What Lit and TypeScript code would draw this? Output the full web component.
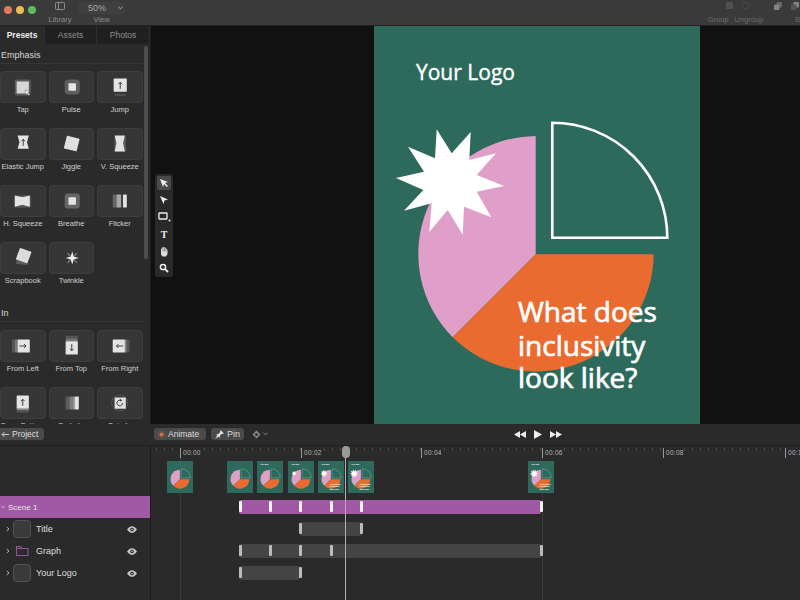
import { LitElement, html, svg, css } from 'lit';
import { customElement } from 'lit/decorators.js';

const STAR =
  '436.7,129.3 451.7,153.3 470.7,132 469.3,160 496,153.3 476.7,175 504,186 476.7,191.7 491.3,217.3 464,206.7 462.7,234.7 447.7,210 429.3,232 431.7,203.3 404,210.7 423.3,190 396,178 424,171.7 408,146.7 435,158.3';

// stage of the poster shown on each timeline thumbnail
interface PosterOpts {
  logo?: boolean;
  star?: number;
  title?: boolean;
}

function poster({ logo = true, star = 1, title = true }: PosterOpts) {
  const s = star;
  return html`<svg class="poster" viewBox="374 26 326 401" preserveAspectRatio="xMidYMin slice">
    <rect x="374" y="26" width="326" height="401" fill="#2d6a5c" />
    <path d="M535.7 136A118 118 0 0 0 452.7 337.3L535.7 254.3Z" fill="#e09fc8" />
    <path d="M452.7 337.3A118 118 0 0 0 653.7 254.3H535.7Z" fill="#ea6b2f" />
    <path d="M552.3 122.8A115 115 0 0 1 667.3 237.8H552.3Z" fill="none" stroke="#fff" stroke-width="2.6" />
    ${s > 0
      ? svg`<polygon points=${STAR} fill="#fff"
          transform="translate(${450 * (1 - s)} ${181 * (1 - s)}) scale(${s})" />`
      : ''}
    ${logo
      ? svg`<text x="416" y="80" class="logo-text">Your Logo</text>`
      : ''}
    ${title
      ? svg`<text class="title-text">
          <tspan x="518" y="322">What does</tspan>
          <tspan x="518" y="356">inclusivity</tspan>
          <tspan x="518" y="388">look like?</tspan>
        </text>`
      : ''}
  </svg>`;
}

// preset thumbnails, drawn on the 45x32 tile
const sq = (x: number, y: number, w: number, h: number, fill = '#e4e4e4', r = 0.5) =>
  svg`<rect x=${x} y=${y} width=${w} height=${h} rx=${r} fill=${fill} />`;
const arrow = (d: string) =>
  svg`<path d=${d} fill="none" stroke="#333" stroke-width="1" />`;

const ICONS: Record<string, unknown> = {
  Tap: svg`${sq(14, 8, 17, 17, '#5c5c5c', 2)}${sq(16, 10, 13, 13, '#d6d6d6')}
    <path d="M25 19l5 2-2 1 2 2-1 1-2-2-1 2z" fill="#eee" stroke="#444" stroke-width=".4" />`,
  Pulse: svg`${sq(15, 8, 16, 16, '#5e5e5e', 4)}${sq(19, 12, 8, 8)}`,
  Jump: svg`${sq(16, 7, 14, 14)}${sq(17, 24, 12, 1, '#666')}${arrow('M23 18v-7M21 13l2-2 2 2')}`,
  'Elastic Jump': svg`<path d="M17 7h12l-2 7 2 7H17l2-7z" fill="#e4e4e4" />${arrow('M23 18v-7M21 13l2-2 2 2')}`,
  Jiggle: svg`${svg`<rect x="15.5" y="8.5" width="14" height="14" rx=".5" fill="#e0e0e0" transform="rotate(14 22.5 15.5)" />`}`,
  'V. Squeeze': svg`${sq(17, 8, 12, 16, '#5c5c5c')}<path d="M17 7h11l-2 8 2 9H17l2-9z" fill="#e2e2e2" />`,
  'H. Squeeze': svg`${sq(14, 10, 17, 13, '#5c5c5c')}<path d="M14 10l8 2 8-2v12l-8-2-8 2z" fill="#e4e4e4" />`,
  Breathe: svg`${sq(15, 8, 16, 16, '#666', 3)}${sq(19, 12, 8, 8)}`,
  Flicker: svg`${sq(15, 9, 4, 14, '#666')}${sq(19, 9, 5, 14, '#a8a8a8')}${sq(24, 9, 2, 14, '#444')}${sq(26, 9, 4, 14)}`,
  Scrapbook: svg`<rect x="16" y="11" width="12" height="12" fill="#5c5c5c" transform="rotate(6 22 17)" />
    <rect x="17" y="7" width="13" height="13" rx=".5" fill="#dcdcdc" transform="rotate(20 23.5 13.5)" />`,
  Twinkle: svg`<path d="M23 9l1.600 5.400L30 16l-5.400 1.600L23 23l-1.600-5.400L16 16l5.400-1.600z" fill="#eee" />
    <path d="M18 11l3 3M28 11l-3 3M18 21l3-3M28 21l-3-3" stroke="#777" stroke-width="1.600" />`,
  'From Left': svg`${sq(11, 9, 3, 14, '#555')}${sq(14, 9, 3, 14, '#777')}${sq(17, 9, 13, 14)}${arrow('M19 16h7M24 14l2 2-2 2')}`,
  'From Top': svg`${sq(16, 5, 13, 3, '#555')}${sq(16, 8, 13, 3, '#777')}${sq(16, 11, 13, 14)}${arrow('M22.500 14v7M20.500 19l2 2 2-2')}`,
  'From Right': svg`${sq(15, 9, 13, 14)}${sq(28, 9, 2, 14, '#888')}${sq(30, 9, 3, 14, '#555')}${arrow('M26 16h-7M21 14l-2 2 2 2')}`,
  'From Bottom': svg`${sq(16, 8, 13, 14)}${sq(16, 22, 13, 2, '#888')}${sq(16, 24, 13, 2, '#555')}${arrow('M22.500 19v-7M20.500 14l2-2 2 2')}`,
  'Fade In': svg`${sq(16, 9, 4, 14, '#5c5c5c')}${sq(20, 9, 4, 14, '#7c7c7c')}${sq(24, 9, 2, 14, '#a0a0a0')}${sq(26, 9, 4, 14)}`,
  'Spin In': svg`<circle cx="22.500" cy="16" r="8.500" fill="none" stroke="#777" stroke-dasharray="1 1" />
    ${sq(17, 10, 12, 12, '#e0e0e0')}
    <path d="M25.500 16a3 3 0 1 1-1.500-2.600" fill="none" stroke="#333" />
    <path d="M22.500 11.500l2.500 1.600-2 1.400z" fill="#333" />`,
};

const EMPHASIS = ['Tap', 'Pulse', 'Jump', 'Elastic Jump', 'Jiggle', 'V. Squeeze', 'H. Squeeze', 'Breathe', 'Flicker', 'Scrapbook', 'Twinkle'];
const IN = ['From Left', 'From Top', 'From Right', 'From Bottom', 'Fade In', 'Spin In'];

const THUMBS: { x: number; opts: PosterOpts }[] = [
  { x: 167, opts: { logo: false, star: 0, title: false } },
  { x: 227, opts: { logo: false, star: 0, title: false } },
  { x: 257, opts: { star: 0, title: false } },
  { x: 288, opts: { star: 0.55, title: false } },
  { x: 318, opts: { star: 0.85 } },
  { x: 348, opts: {} },
  { x: 528, opts: {} },
];

const TRACKS = [
  { purple: true, from: 239, to: 541, keys: [240, 270, 300, 331, 361, 541] },
  { purple: false, from: 300, to: 362, keys: [300, 361] },
  { purple: false, from: 239, to: 541, keys: [240, 270, 300, 331, 541] },
  { purple: false, from: 239, to: 300, keys: [240, 300] },
];

const TIMES = [
  { x: 180, t: '00:00' },
  { x: 301, t: '00:02' },
  { x: 421, t: '00:04' },
  { x: 542, t: '00:06' },
  { x: 663, t: '00:08' },
  { x: 785, t: '00:10' },
];

const TRACK_LEFT = 151;

const eye = html`<svg class="eye" viewBox="0 0 12 8" width="10" height="7">
  <path d="M0 4C2 1 4 0 6 0s4 1 6 4c-2 3-4 4-6 4S2 7 0 4z" fill="#c4c4c4" />
  <circle cx="6" cy="4" r="2.200" fill="#2a2a2a" />
  <circle cx="6" cy="4" r="1" fill="#c4c4c4" />
</svg>`;

const chevron = html`<svg class="chev" viewBox="0 0 6 8" width="4" height="6">
  <path d="M1 1l3.500 3L1 7" fill="none" stroke="#c0c0c0" stroke-width="1.300" />
</svg>`;

@customElement('app-root')
export class AppRoot extends LitElement {
  static styles = css`
    :host {
      display: flex;
      flex-direction: column;
      width: 800px;
      height: 600px;
      overflow: hidden;
      background: #2a2a2a;
      font-family: 'Liberation Sans', Arial, sans-serif;
      color: #ddd;
    }
    .topbar {
      flex: 0 0 26px;
      box-sizing: border-box;
      min-height: 0;
      display: flex;
      background: #3a3a3a;
      border-bottom: 1px solid #232323;
      color: #8a8a8a;
      font-size: 7.500px;
    }
    .lights {
      display: flex;
      gap: 4px;
      margin: 6px 0 0 4px;
    }
    .lights i {
      width: 8px;
      height: 8px;
      border-radius: 50%;
    }
    .tool {
      display: flex;
      flex-direction: column;
      align-items: center;
      justify-content: space-between;
      padding: 2px 0 1px;
    }
    .library {
      width: 30px;
      margin-left: 9px;
    }
    .view {
      width: 47px;
      margin-left: 3px;
    }
    .zoom {
      display: flex;
      align-items: center;
      justify-content: center;
      gap: 12px;
      width: 100%;
      height: 12px;
      box-sizing: border-box;
      padding-left: 8px;
      background: #3f3f3f;
      border-radius: 3px;
      color: #a8a8a8;
      font-size: 9px;
    }
    .right {
      display: flex;
      margin-left: auto;
      margin-right: -12px;
      gap: 12px;
    }
    .cluster {
      display: flex;
      flex-direction: column;
      justify-content: space-between;
      padding: 2px 0 1px;
      color: #6c6c6c;
    }
    .cluster-icons {
      display: flex;
      justify-content: flex-end;
      gap: 9px;
    }
    .cluster-labels {
      display: flex;
      gap: 6px;
    }
    .main {
      flex: 0 0 398px;
      display: flex;
      min-height: 0;
    }
    .panel {
      position: relative;
      flex: 0 0 150px;
      overflow: hidden;
      background: #2a2a2a;
      border-right: 1px solid #1c1c1c;
    }
    .tabs {
      display: flex;
      height: 18px;
      font-size: 8.500px;
      line-height: 18px;
      text-align: center;
      background: #202020;
      color: #8e8e8e;
    }
    .tabs span {
      border-right: 1px solid #2e2e2e;
    }
    .tabs .active {
      background: #2a2a2a;
      color: #eee;
      font-weight: bold;
    }
    .section {
      width: 142px;
      margin-top: 5px;
      height: 14px;
      border-bottom: 1px solid #363636;
      padding-left: 1px;
      font-size: 9px;
      line-height: 12px;
      color: #d8d8d8;
    }
    .grid {
      display: grid;
      grid-template-columns: repeat(3, 45.500px);
      column-gap: 3px;
      grid-auto-rows: 57px;
      margin-top: 7px;
    }
    .grid.second {
      margin-top: 8px;
    }
    .spacer {
      height: 3px;
    }
    .preset {
      display: flex;
      flex-direction: column;
      align-items: center;
      font-size: 7.500px;
      color: #cfcfcf;
    }
    .tile {
      width: 100%;
      height: 32px;
      box-sizing: border-box;
      background: #363636;
      border: 1px solid #3e3e3e;
      border-radius: 4px;
      margin-bottom: 2px;
    }
    .tile svg {
      display: block;
      width: 100%;
      height: 100%;
    }
    .scrollbar {
      position: absolute;
      left: 144px;
      top: 20px;
      width: 4px;
      height: 213px;
      border-radius: 2px;
      background: #4e4e4e;
    }
    .canvas {
      position: relative;
      flex: 1;
      background: #111;
      padding-left: 223px;
      min-width: 0;
    }
    .artboard {
      width: 326px;
      height: 398px;
      overflow: hidden;
    }
    .artboard .poster {
      width: 326px;
      height: 401px;
    }
    .poster {
      display: block;
    }
    .logo-text {
      font: 21px 'Open Sans', sans-serif;
      fill: #fff;
      stroke: #fff;
      stroke-width: 0.4px;
    }
    .title-text {
      font: 28px 'Open Sans', sans-serif;
      fill: #fff;
      stroke: #fff;
      stroke-width: 0.7px;
    }
    .tools {
      position: absolute;
      left: 4px;
      top: 148px;
      width: 18px;
      height: 103px;
      box-sizing: border-box;
      padding: 2px;
      display: flex;
      flex-direction: column;
      gap: 3px;
      background: #292929;
      border-radius: 3px;
    }
    .tools div {
      flex: 0 0 14px;
      display: flex;
      align-items: center;
      justify-content: center;
      border-radius: 2px;
      color: #eee;
      font: bold 10px 'Liberation Serif', serif;
    }
    .tools .on {
      background: #4a4a4a;
    }
    .timeline {
      position: relative;
      flex: 1;
      display: grid;
      grid-template-columns: 151px 1fr;
      grid-template-rows: 22px 1fr;
      background: #2a2a2a;
    }
    .head-left,
    .head-right {
      display: flex;
      align-items: center;
      border-bottom: 1px solid #1f1f1f;
    }
    .head-left {
      padding-bottom: 1px;
      box-sizing: border-box;
    }
    .head-right {
      padding: 0 0 1px 3px;
      box-sizing: border-box;
    }
    .btn {
      display: flex;
      align-items: center;
      gap: 3px;
      height: 12px;
      padding: 0 4px;
      background: #4a4a4a;
      border-radius: 3px;
      color: #ddd;
      font-size: 8.500px;
    }
    .project {
      width: 44px;
      box-sizing: border-box;
      padding: 0 1px;
      border-radius: 0 3px 3px 0;
    }
    .animate {
      width: 52px;
      box-sizing: border-box;
    }
    .pin {
      width: 33px;
      box-sizing: border-box;
      margin-left: 5px;
      font-size: 9px;
    }
    .key {
      display: flex;
      align-items: center;
      gap: 2px;
      margin-left: 8px;
    }
    .transport {
      display: flex;
      align-items: center;
      gap: 8px;
      margin-left: 246px;
    }
    .layers {
      border-right: 1px solid #1c1c1c;
      padding-top: 50px;
    }
    .scene {
      display: flex;
      align-items: center;
      gap: 3px;
      height: 22px;
      box-sizing: border-box;
      padding-left: 1px;
      background: #a05aa5;
      font-size: 8px;
      color: #f0e0f0;
    }
    .scene .chev {
      transform: rotate(90deg);
    }
    .layer {
      display: flex;
      align-items: center;
      height: 22px;
      padding-left: 6px;
      font-size: 9px;
      color: #ddd;
    }
    .swatch {
      width: 18px;
      height: 18px;
      box-sizing: border-box;
      margin-left: 3px;
      background: #3a3a3a;
      border: 1px solid #525252;
      border-radius: 4px;
    }
    .folder {
      display: block;
      margin-left: 3px;
    }
    .layer b {
      flex: 1;
      margin-left: 5px;
      font-weight: normal;
    }
    .eye {
      margin-right: 13px;
    }
    .tracks {
      position: relative;
      overflow: hidden;
    }
    .ruler {
      position: relative;
      height: 12px;
      background: repeating-linear-gradient(90deg, #4a4a4a 0 1px, transparent 1px 8px) 5px 2px / 100% 3px no-repeat;
    }
    .time {
      position: absolute;
      top: 2px;
      height: 10px;
      border-left: 1px solid #999;
      padding-left: 2px;
      font-size: 6.500px;
      line-height: 10px;
      letter-spacing: 0.3px;
      color: #b4b4b4;
      background: #2a2a2a;
    }
    .thumbs {
      position: relative;
      height: 38px;
    }
    .thumb {
      position: absolute;
      top: 3px;
      width: 26px;
      height: 32px;
      overflow: hidden;
    }
    .thumb .poster {
      width: 100%;
      height: 100%;
    }
    .row {
      position: relative;
      height: 22px;
    }
    .bar {
      position: absolute;
      top: 4px;
      height: 13.500px;
      border-radius: 2px;
      background: #444;
    }
    .bar.purple {
      background: #a05aa5;
    }
    .handle {
      position: absolute;
      top: 4px;
      width: 3px;
      height: 11px;
      margin-top: 1px;
      border-radius: 1px;
      background: #bcbcbc;
    }
    .handle.bright {
      background: #f2f2f2;
    }
    .guide {
      position: absolute;
      top: 12px;
      bottom: 0;
      width: 1px;
      background: #3b3b3b;
    }
    .playhead {
      position: absolute;
      top: 0;
      bottom: 0;
      left: 194px;
      width: 1px;
      background: #b0b0b0;
    }
    .playhead i {
      position: absolute;
      left: -3.500px;
      top: 0;
      width: 8px;
      height: 12px;
      border-radius: 4px;
      background: #9a9a9a;
    }
  `;

  preset(name: string) {
    return html`<div class="preset">
      <div class="tile"><svg viewBox="0 0 45 32">${ICONS[name]}</svg></div>
      ${name}
    </div>`;
  }

  render() {
    return html`
      <div class="topbar">
        <div class="lights">
          <i style="background:#dd7a5c"></i>
          <i style="background:#eebc50"></i>
          <i style="background:#5dbb5d"></i>
        </div>
        <div class="tool library">
          <svg width="10" height="8" viewBox="0 0 10 8">
            <rect x=".5" y=".5" width="9" height="7" rx="1" fill="none" stroke="#8c8c8c" />
            <path d="M3.500 1v6" stroke="#8c8c8c" />
          </svg>
          Library
        </div>
        <div class="tool view">
          <div class="zoom">
            50%
            <svg width="5" height="4" viewBox="0 0 6 4">
              <path d="M.5.5l2.500 2.500L5.500.5" fill="none" stroke="#aaa" stroke-width="1.200" />
            </svg>
          </div>
          View
        </div>
        <div class="right">
          <div class="cluster">
            <div class="cluster-icons">
              <svg width="7" height="7" viewBox="0 0 7 7"><rect width="7" height="7" rx="1" fill="#505050" /></svg>
              <svg width="7" height="7" viewBox="0 0 7 7">
                <rect x=".5" y=".5" width="6" height="6" rx="1" fill="none" stroke="#505050" stroke-dasharray="1.500 1" />
              </svg>
              <span style="width:5px"></span>
            </div>
            <div class="cluster-labels"><span>Group</span><span>Ungroup</span></div>
          </div>
          <div class="cluster">
            <div class="cluster-icons" style="justify-content:flex-start;margin-left:-1px">
              <svg width="8" height="8" viewBox="0 0 8 8">
                <rect x="2.500" width="5.500" height="5.500" rx="1" fill="#666" /><rect y="2.500" width="5.500" height="5.500" rx="1" fill="#868686" />
              </svg>
              <svg width="8" height="8" viewBox="0 0 8 8">
                <rect x="2.500" width="5.500" height="5.500" rx="1" fill="#868686" /><rect y="2.500" width="5.500" height="5.500" rx="1" fill="#555" />
              </svg>
            </div>
            <div style="margin-left:20px">Back</div>
          </div>
        </div>
      </div>

      <div class="main">
        <div class="panel">
          <div class="tabs">
            <span class="active" style="width:45px">Presets</span>
            <span style="width:52px">Assets</span>
            <span style="width:53px">Photos</span>
          </div>
          <div class="section">Emphasis</div>
          <div class="grid">${EMPHASIS.map((n) => this.preset(n))}</div>
          <div class="spacer"></div>
          <div class="section">In</div>
          <div class="grid second">${IN.map((n) => this.preset(n))}</div>
          <div class="scrollbar"></div>
        </div>
        <div class="canvas">
          <div class="artboard">${poster({})}</div>
          <div class="tools">
            <div class="on">
              <svg width="10" height="10" viewBox="0 0 10 10"><path d="M1 1l8 3-3 1 3 3-1 1-3-3-1 3z" fill="#eee" /></svg>
            </div>
            <div>
              <svg width="10" height="10" viewBox="0 0 10 10"><path d="M1 1l8 3.500-3.500 1L4.500 9z" fill="#eee" /></svg>
            </div>
            <div>
              <svg width="13" height="10" viewBox="0 0 13 10">
                <rect x="1" y="1" width="8" height="6" rx=".5" fill="none" stroke="#eee" stroke-width="1.300" />
                <circle cx="11.500" cy="8.500" r="1" fill="#eee" />
              </svg>
            </div>
            <div>T</div>
            <div>
              <svg width="10" height="11" viewBox="0 0 10 11">
                <path d="M2 5V3l1-.5V1.500h1l.500-.5 1 .5h1L7.500 3 8.500 4v4L7 10.500H3.500L2 8.500z" fill="#ddd" />
                <path d="M4 2.500v3M5.500 2v3.500M7 2.500v3" stroke="#555" stroke-width=".6" />
              </svg>
            </div>
            <div>
              <svg width="10" height="10" viewBox="0 0 10 10">
                <circle cx="4" cy="4" r="2.600" fill="none" stroke="#eee" stroke-width="1.500" />
                <path d="M6 6l3 3" stroke="#eee" stroke-width="1.800" />
              </svg>
            </div>
          </div>
        </div>
      </div>

      <div class="timeline">
        <div class="head-left">
          <div class="btn project">
            <svg width="8" height="7" viewBox="0 0 8 7"><path d="M8 3.500H1M3.500 1L1 3.500 3.500 6" fill="none" stroke="#ccc" /></svg>
            Project
          </div>
        </div>
        <div class="head-right">
          <div class="btn animate">
            <svg width="7" height="7" viewBox="0 0 7 7">
              <circle cx="3.500" cy="3.500" r="2" fill="#d8703c" />
              <circle cx="3.500" cy="3.500" r="3.200" fill="none" stroke="#d8703c" stroke-width=".6" stroke-dasharray="1 1" />
            </svg>
            Animate
          </div>
          <div class="btn pin">
            <svg width="9" height="9" viewBox="0 0 8 8"><path d="M5 0l3 3-2 .5-1.500 1.500L4 7 1 4l2-.5L4.500 2zM2 5L0 8l3-2z" fill="#ddd" /></svg>
            Pin
          </div>
          <div class="key">
            <svg width="9" height="9" viewBox="0 0 9 9">
              <path d="M4.500.5l4 4-4 4-4-4z" fill="#888" /><circle cx="4.500" cy="4.500" r="1.500" fill="#333" />
            </svg>
            <svg width="5" height="4" viewBox="0 0 6 4"><path d="M.5.5L3 3 5.500.5" fill="none" stroke="#999" /></svg>
          </div>
          <div class="transport">
            <svg width="12" height="7" viewBox="0 0 12 7"><path d="M6 0v7L0 3.500zM12 0v7L6 3.500z" fill="#eee" /></svg>
            <svg width="8" height="9" viewBox="0 0 8 9"><path d="M0 0l8 4.500L0 9z" fill="#eee" /></svg>
            <svg width="12" height="7" viewBox="0 0 12 7"><path d="M0 0v7l6-3.500zM6 0v7l6-3.500z" fill="#eee" /></svg>
          </div>
        </div>

        <div class="layers">
          <div class="scene">${chevron}<span>Scene 1</span></div>
          <div class="layer">${chevron}<div class="swatch"></div><b>Title</b>${eye}</div>
          <div class="layer">
            ${chevron}
            <svg class="folder" width="18" height="12" viewBox="0 0 18 12">
              <path d="M3.500 10.500V1.500h4l1.500 2h6v7z" fill="none" stroke="#94559a" stroke-width="1.100" />
              <path d="M3.500 3.500h11" stroke="#94559a" />
            </svg>
            <b>Graph</b>${eye}
          </div>
          <div class="layer">${chevron}<div class="swatch"></div><b>Your Logo</b>${eye}</div>
        </div>

        <div class="tracks">
          <div class="guide" style="left:${180 - TRACK_LEFT}px"></div>
          <div class="guide" style="left:${542 - TRACK_LEFT}px"></div>
          <div class="ruler">
            ${TIMES.map((m) => html`<span class="time" style="left:${m.x - TRACK_LEFT}px">${m.t}</span>`)}
          </div>
          <div class="thumbs">
            ${THUMBS.map((t) => html`<div class="thumb" style="left:${t.x - TRACK_LEFT}px">${poster(t.opts)}</div>`)}
          </div>
          ${TRACKS.map(
            (t) => html`<div class="row">
              <div
                class="bar ${t.purple ? 'purple' : ''}"
                style="left:${t.from - TRACK_LEFT}px;width:${t.to - t.from}px"
              ></div>
              ${t.keys.map(
                (k) => html`<div
                  class="handle ${t.purple ? 'bright' : ''}"
                  style="left:${k - 1 - TRACK_LEFT}px"
                ></div>`
              )}
            </div>`
          )}
          <div class="playhead"><i></i></div>
        </div>
      </div>
    `;
  }
}
